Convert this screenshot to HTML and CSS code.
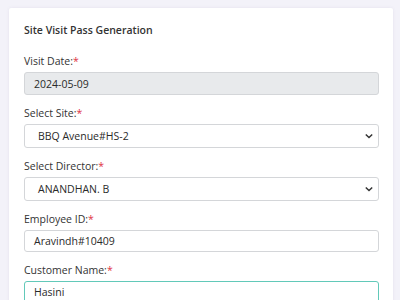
FILE: index.html
```html
<!DOCTYPE html>
<html>
<head>
<meta charset="utf-8">
<link rel="stylesheet" href="styles.css">
</head>
<body>
<div class="card">
  <h1 class="title">Site Visit Pass Generation</h1>
  <div class="group">
    <label class="label">Visit Date:<span class="req">*</span></label>
    <div class="input disabled">2024-05-09</div>
  </div>
  <div class="group">
    <label class="label">Select Site:<span class="req">*</span></label>
    <div class="input select"><span>BBQ Avenue#HS-2</span><svg class="chev" viewBox="0 0 10 6" width="8" height="6"><path d="M1 1l4 4 4-4" fill="none" stroke="#333" stroke-width="1.8"/></svg></div>
  </div>
  <div class="group">
    <label class="label">Select Director:<span class="req">*</span></label>
    <div class="input select"><span>ANANDHAN. B</span><svg class="chev" viewBox="0 0 10 6" width="8" height="6"><path d="M1 1l4 4 4-4" fill="none" stroke="#333" stroke-width="1.8"/></svg></div>
  </div>
  <div class="group">
    <label class="label">Employee ID:<span class="req">*</span></label>
    <div class="input">Aravindh#10409</div>
  </div>
  <div class="group">
    <label class="label">Customer Name:<span class="req">*</span></label>
    <div class="input focus">Hasini</div>
  </div>
</div>
</body>
</html>
```

FILE: styles.css
```css
html, body {
  margin: 0;
  padding: 0;
  background: #f3f2f9;
  height: 300px;
  overflow: hidden;
}
body {
  padding: 8px 7px 0 9px;
  font-family: "Open Sans", "Noto Sans", sans-serif;
  color: #333;
}
.card {
  background: #fff;
  padding: 16px 14px 20px 15px;
  border-radius: 2px;
  box-shadow: 0 0 3px rgba(120, 110, 160, 0.12);
  height: 400px;
}
.title {
  margin: 0 0 18px;
  font-size: 10.5px;
  line-height: 13px;
  font-weight: 600;
  color: #333;
}
.group {
  margin-bottom: 12px;
}
.label {
  display: block;
  font-size: 10.5px;
  line-height: 13px;
  margin-bottom: 4px;
  color: #333;
}
.req {
  color: #e0313f;
}
.input {
  box-sizing: border-box;
  height: 22px;
  border: 1px solid #d4d6d9;
  border-radius: 3px;
  padding: 0 9px;
  font-size: 10.5px;
  line-height: 20px;
  color: #2a2a2a;
  display: flex;
  align-items: center;
}
.input.disabled {
  background: #e8eaec;
  height: 23px;
}
.input.select {
  height: 24px;
  padding: 0 5px 0 13px;
  justify-content: space-between;
}
.input.focus {
  border-color: #62c9b9;
}
.chev {
  display: block;
}
```
